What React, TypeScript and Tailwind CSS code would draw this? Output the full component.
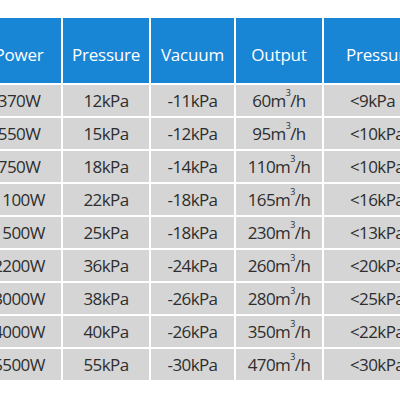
import React from "react";

const rows: [string, string, string, string, string][] = [
  ["370W", "12kPa", "-11kPa", "60", "<9kPa"],
  ["550W", "15kPa", "-12kPa", "95", "<10kPa"],
  ["750W", "18kPa", "-14kPa", "110", "<10kPa"],
  ["1100W", "22kPa", "-18kPa", "165", "<16kPa"],
  ["1500W", "25kPa", "-18kPa", "230", "<13kPa"],
  ["2200W", "36kPa", "-24kPa", "260", "<20kPa"],
  ["3000W", "38kPa", "-26kPa", "280", "<25kPa"],
  ["4000W", "40kPa", "-26kPa", "350", "<22kPa"],
  ["5500W", "55kPa", "-30kPa", "470", "<30kPa"],
];

const headers = ["Power", "Pressure", "Vacuum", "Output", "Pressure"];

export default function App() {
  return (
    <div
      className="w-[400px] h-[400px] bg-white overflow-hidden pt-[18px]"
      style={{ fontFamily: '"Open Sans", "Noto Sans", sans-serif' }}
    >
      <div className="ml-[-23px] w-[460px] grid grid-cols-[84px_86px_83px_86px_110px] gap-[2px] bg-white">
        {headers.map((h, i) => (
          <div
            key={i}
            className={
              i === 4
                ? "h-[65px] pt-[9px] pl-[22px] bg-[#1985d5] text-white text-[17px] tracking-[-0.2px] flex items-center justify-start"
                : "h-[65px] pt-[9px] bg-[#1985d5] text-white text-[17px] tracking-[-0.2px] flex items-center justify-center"
            }
          >
            {h}
          </div>
        ))}
        {rows.map((r, ri) => (
          <React.Fragment key={ri}>
            {r.map((c, ci) => (
              <div
                key={ci}
                className={
                  ci === 4
                    ? "h-[31px] pl-[26px] bg-[#d5d5d5] text-[#2e2e2e] text-[17px] tracking-[-0.6px] flex items-center justify-start"
                    : "h-[31px] bg-[#d5d5d5] text-[#2e2e2e] text-[17px] tracking-[-0.6px] flex items-center justify-center"
                }
              >
                {ci === 3 ? (
                  <span>
                    {c}m<sup className="text-[9px] align-super">3</sup>/h
                  </span>
                ) : (
                  c
                )}
              </div>
            ))}
          </React.Fragment>
        ))}
      </div>
    </div>
  );
}
